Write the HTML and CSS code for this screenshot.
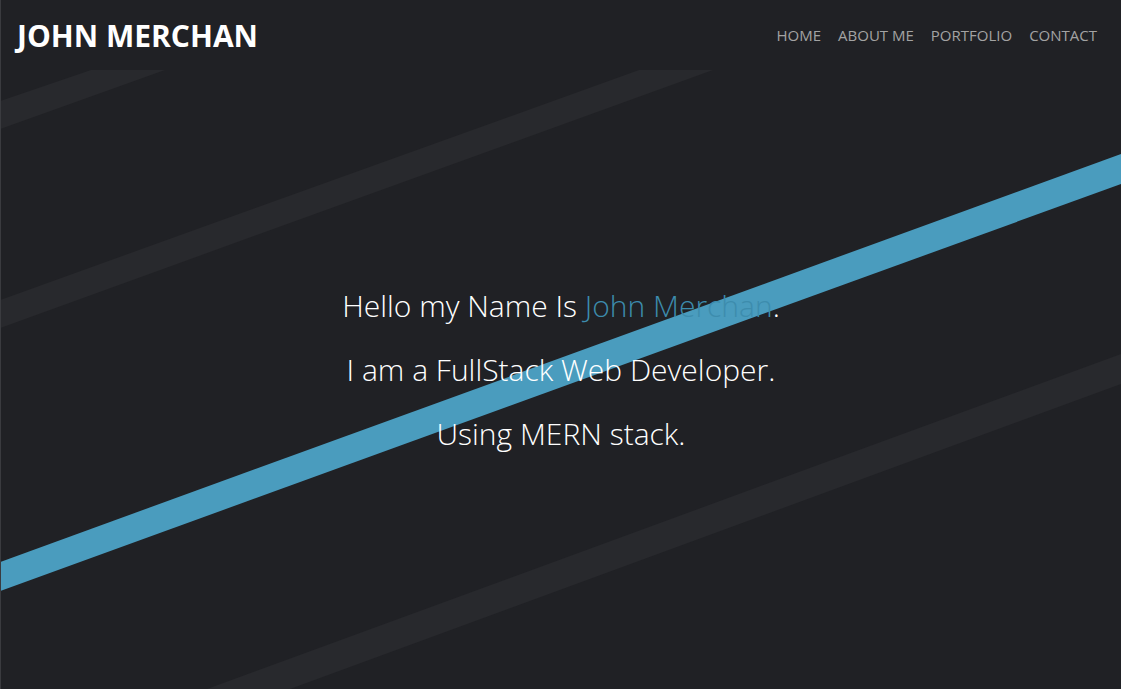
FILE: index.html
```html
<!DOCTYPE html>
<html lang="en">
<head>
<meta charset="utf-8">
<title>John Merchan</title>
<link rel="stylesheet" href="styles.css">
</head>
<body>
<div class="page">
  <header class="topbar">
    <div class="brand">JOHN MERCHAN</div>
    <nav class="nav">
      <a href="#" class="nav-link">HOME</a>
      <a href="#" class="nav-link">ABOUT ME</a>
      <a href="#" class="nav-link">PORTFOLIO</a>
      <a href="#" class="nav-link">CONTACT</a>
    </nav>
  </header>
  <main class="hero">
    <svg class="stripes" viewBox="0 0 1120 619" preserveAspectRatio="none" aria-hidden="true">
      <polygon class="stripe-gray" points="-1,31 90,0 164,0 -1,59"/>
      <polygon class="stripe-gray" points="-1,230 638,0 712,0 -1,258"/>
      <polygon class="stripe-blue" points="-1,492 1120,84 1120,114 -1,521"/>
      <polygon class="stripe-gray" points="1120,284 1120,314 289,619 206,619"/>
    </svg>
    <div class="intro">
      <p class="line">Hello my Name Is <span class="accent">John Merchan</span>.</p>
      <p class="line">I am a FullStack Web Developer.</p>
      <p class="line">Using MERN stack.</p>
    </div>
  </main>
</div>
</body>
</html>
```

FILE: styles.css
```css
html, body {
  margin: 0;
  padding: 0;
  background: #202125;
  overflow: hidden;
}

.page {
  width: 1120px;
  height: 689px;
  border-left: 1px solid #3a3b3f;
  background: #202125;
  display: flex;
  flex-direction: column;
  font-family: "Open Sans", "Noto Sans", sans-serif;
}

.topbar {
  height: 70px;
  flex: 0 0 70px;
  display: flex;
  align-items: center;
  justify-content: space-between;
  padding: 0 24px 0 16px;
}

.brand {
  color: #ffffff;
  font-weight: 700;
  font-size: 30px;
  letter-spacing: 0;
  line-height: 1;
  padding-top: 1px;
}

.nav {
  display: flex;
  gap: 17px;
}

.nav-link {
  color: #a3a3a3;
  text-decoration: none;
  font-size: 15px;
  font-weight: 400;
  line-height: 1;
}

.hero {
  position: relative;
  flex: 1 1 auto;
  display: flex;
  align-items: center;
  justify-content: center;
  padding-bottom: 19px;
}

.stripes {
  position: absolute;
  left: 0;
  top: 0;
  width: 100%;
  height: 100%;
}

.stripe-gray {
  fill: #28292d;
}

.stripe-blue {
  fill: #4a9cbe;
}

.intro {
  position: relative;
  text-align: center;
  color: #ffffff;
}

.line {
  margin: 0;
  font-size: 30px;
  font-weight: 300;
  line-height: 64px;
}

.accent {
  color: #3d8cad;
}
```
